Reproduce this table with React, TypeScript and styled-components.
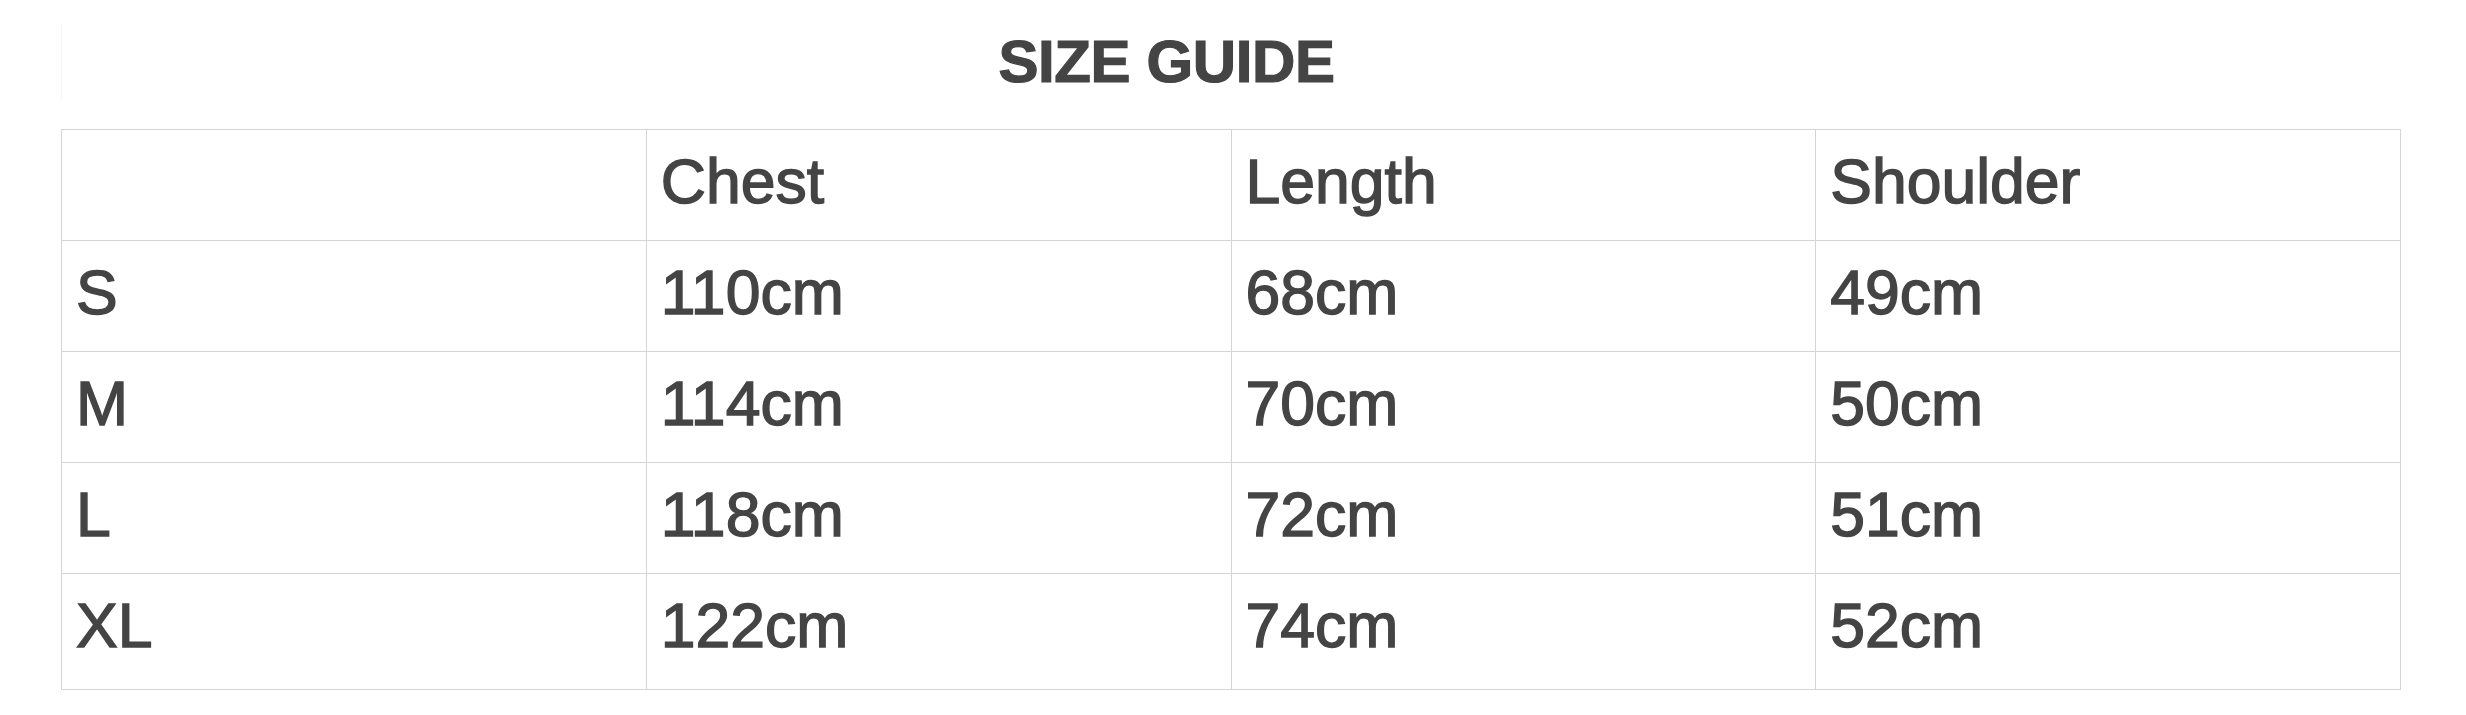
import styled, { createGlobalStyle } from 'styled-components'

const GlobalStyle = createGlobalStyle`
  html, body {
    margin: 0;
    padding: 0;
    background: #ffffff;
  }
  body {
    font-family: 'Liberation Sans', Arial, Helvetica, sans-serif;
    color: #444444;
  }
`

const header = ['', 'Chest', 'Length', 'Shoulder']

const rows = [
  ['S', '110cm', '68cm', '49cm'],
  ['M', '114cm', '70cm', '50cm'],
  ['L', '118cm', '72cm', '51cm'],
  ['XL', '122cm', '74cm', '52cm'],
]

const App = () => {
  return (
    <>
      <GlobalStyle />
      <Page>
        <Caption>
          <Title>SIZE GUIDE</Title>
        </Caption>
        <Table>
          {header.map((h, i) => (
            <Cell key={'h' + i}>{h}</Cell>
          ))}
          {rows.map((row, r) =>
            row.map((value, c) => (
              <Cell key={r + '-' + c} last={r === rows.length - 1}>
                {value}
              </Cell>
            ))
          )}
        </Table>
      </Page>
    </>
  )
}

const Page = styled.div`
  padding: 23px 66px 0 61px;
`

const Caption = styled.div`
  width: 2210px;
  height: 77px;
  border-left: 1px solid #f7f7f7;
  box-sizing: border-box;
  text-align: center;
`

const Title = styled.h1`
  margin: 0;
  font-size: 60px;
  line-height: 77px;
  font-weight: 700;
  letter-spacing: -0.4px;
  color: #444444;
  -webkit-text-stroke: 1.2px #444444;
`

const Table = styled.div`
  margin-top: 29px;
  width: 2340px;
  box-sizing: border-box;
  display: grid;
  grid-template-columns: repeat(4, 1fr);
  border-top: 1px solid #d5d5d5;
  border-left: 1px solid #d5d5d5;
`

const Cell = styled.div<{ last?: boolean }>`
  box-sizing: border-box;
  height: ${(p) => (p.last ? '116px' : '111px')};
  padding: 20px 14px 0 14px;
  border-right: 1px solid #d5d5d5;
  border-bottom: 1px solid #d5d5d5;
  font-size: 62.5px;
  line-height: 62px;
  color: #444444;
  -webkit-text-stroke: 1.4px #444444;
  white-space: nowrap;
`

export default App
